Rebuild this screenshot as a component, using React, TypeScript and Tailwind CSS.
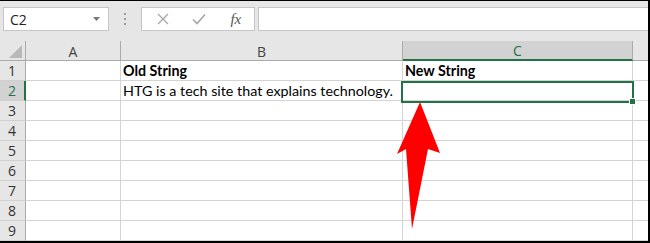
import React from "react";

const rows = [1, 2, 3, 4, 5, 6, 7, 8, 9];

function Cell({ children, className = "" }: { children?: React.ReactNode; className?: string }) {
  return (
    <div className={`h-[20px] border-r border-b border-[#d4d4d4] flex items-center overflow-visible whitespace-nowrap ${className}`}>
      {children}
    </div>
  );
}

export default function App() {
  return (
    <div className="relative w-[650px] h-[243px] overflow-hidden bg-white border-t border-t-black border-r-2 border-r-black border-b-2 border-b-black font-['Lato','Noto_Sans',sans-serif]">
      {/* formula bar */}
      <div className="h-[40px] bg-[#e6e6e6] flex items-start pt-[6px]">
        <div className="ml-[3px] w-[106px] h-[24px] bg-white border border-[#c6c6c6] flex items-center justify-between pl-[6px] pr-[8px]">
          <span className="text-[14px] text-[#222] font-['Open_Sans',sans-serif]">C2</span>
          <svg width="7" height="4" viewBox="0 0 7 4"><path d="M0 0 L7 0 L3.5 4 Z" fill="#777" /></svg>
        </div>
        <div className="w-[32px] h-[24px] flex flex-col items-center justify-center gap-[3px]">
          <div className="w-[2px] h-[2px] bg-[#9a9a9a]" />
          <div className="w-[2px] h-[2px] bg-[#9a9a9a]" />
          <div className="w-[2px] h-[2px] bg-[#9a9a9a]" />
        </div>
        <div className="w-[114px] h-[24px] bg-white border border-[#c6c6c6] flex items-center pl-[3px]">
          <div className="w-[37px] flex justify-center">
            <svg width="12" height="12" viewBox="0 0 12 12"><path d="M1 1 L11 11 M11 1 L1 11" stroke="#a6a6a6" strokeWidth="1.3" /></svg>
          </div>
          <div className="w-[37px] flex justify-center">
            <svg width="14" height="12" viewBox="0 0 14 12"><path d="M1 6.5 L5 10.5 L13 1.5" stroke="#a6a6a6" strokeWidth="1.6" fill="none" /></svg>
          </div>
          <div className="w-[37px] flex justify-center">
            <span className="italic text-[15px] text-[#555] font-['Liberation_Serif',serif] leading-none">fx</span>
          </div>
        </div>
        <div className="ml-[3px] flex-1 h-[24px] bg-white border border-r-0 border-[#c6c6c6]" />
      </div>

      {/* grid */}
      <div className="grid grid-cols-[26px_95px_282px_230px_1fr]">
        {/* header row */}
        <div className="h-[20px] bg-[#e6e6e6] border-r border-b border-[#ababab] relative">
          <svg className="absolute right-[3px] bottom-[2px]" width="13" height="13" viewBox="0 0 13 13"><path d="M13 0 L13 13 L0 13 Z" fill="#b8b8b8" /></svg>
        </div>
        <div className="h-[20px] bg-[#e6e6e6] border-r border-b border-[#ababab] flex items-center justify-center pt-[1px] text-[14px] text-[#444] font-['Open_Sans',sans-serif]">A</div>
        <div className="h-[20px] bg-[#e6e6e6] border-r border-b border-[#ababab] flex items-center justify-center pt-[1px] text-[14px] text-[#444] font-['Open_Sans',sans-serif]">B</div>
        <div className="h-[20px] bg-[#d2d2d2] border-r border-r-[#ababab] border-b-2 border-b-[#217346] flex items-center justify-center pt-[1px] text-[14px] text-[#217346] font-['Open_Sans',sans-serif]">C</div>
        <div className="h-[20px] bg-[#e6e6e6] border-b border-[#ababab]" />

        {rows.map((r) => (
          <React.Fragment key={r}>
            <div
              className={`h-[20px] border-b border-[#d0d0d0] flex items-center pl-[8px] text-[14px] font-['Open_Sans',sans-serif] ${
                r === 2
                  ? "bg-[#d2d2d2] border-r-2 border-r-[#217346] text-[#217346]"
                  : "bg-[#e6e6e6] border-r border-r-[#ababab] text-[#333]"
              }`}
            >
              {r}
            </div>
            <Cell />
            <Cell className="pl-[2px] text-[14.3px] text-black">
              {r === 1 && <span className="font-bold">Old String</span>}
              {r === 2 && <span>HTG is a tech site that explains technology.</span>}
            </Cell>
            <Cell className="pl-[2px] text-[14.3px] text-black">
              {r === 1 && <span className="font-bold">New String</span>}
            </Cell>
            <div className="h-[20px] border-b border-[#d4d4d4]" />
          </React.Fragment>
        ))}
      </div>

      {/* selected cell */}
      <div className="absolute left-[401px] top-[80px] w-[233px] h-[22px] border-2 border-[#217346]" />
      <div className="absolute left-[630px] top-[98px] w-[5px] h-[5px] bg-[#217346] outline outline-1 outline-white" />

      {/* red arrow */}
      <svg className="absolute left-0 top-0 pointer-events-none" width="650" height="243" viewBox="0 0 650 243">
        <polygon points="420,101 440,152 428,148 412,228 406,148 397,153" fill="#ff0000" />
      </svg>
    </div>
  );
}
